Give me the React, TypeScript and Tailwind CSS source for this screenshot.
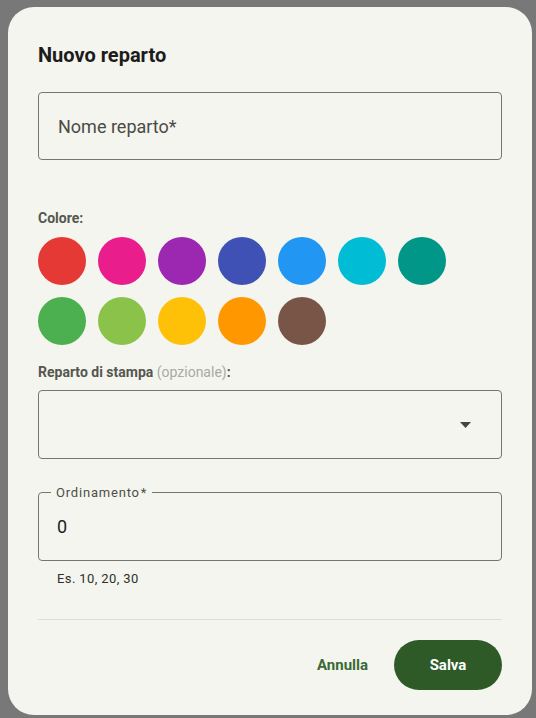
import { useState } from "react";

const colors = [
  "#e53935",
  "#e91e8c",
  "#9c27b0",
  "#3f51b5",
  "#2196f3",
  "#00bcd4",
  "#009688",
  "#4caf50",
  "#8bc34a",
  "#ffc107",
  "#ff9800",
  "#795548",
];

export default function App() {
  const [name, setName] = useState("");
  const [order, setOrder] = useState("0");
  const [selected, setSelected] = useState<string | null>(null);

  return (
    <div
      className="w-[536px] h-[718px] bg-[#787878] pt-[7px] pl-[8px] overflow-hidden"
      style={{ fontFamily: "Roboto, 'Liberation Sans', sans-serif" }}
    >
      <div className="w-[524px] h-[708px] bg-[#f4f5ef] rounded-[26px] px-[30px] pt-[35px] pb-[25px] flex flex-col">
        <h2 className="text-[20px] leading-[26px] font-bold text-[#1c1c1a]">Nuovo reparto</h2>

        <input
          className="mt-[24px] h-[70px] w-full border border-[#727870] rounded-[4px] px-[19px] text-[18px] text-[#222] placeholder:text-[#4a4b46] outline-none bg-transparent"
          placeholder="Nome reparto*"
          value={name}
          onChange={e => setName(e.target.value)}
        />

        <div className="mt-[50px] text-[14px] leading-[16px] font-bold text-[#56574f]">Colore:</div>
        <div className="mt-[11px] grid grid-cols-[repeat(7,48px)] gap-[12px]">
          {colors.map(c => (
            <button
              key={c}
              onClick={() => setSelected(c)}
              className={`w-[48px] h-[48px] rounded-full ${selected === c ? "ring-2 ring-offset-2 ring-[#2d5a27]" : ""}`}
              style={{ backgroundColor: c }}
            />
          ))}
        </div>

        <div className="mt-[19px] text-[14px] leading-[16px] font-bold text-[#56574f]">
          Reparto di stampa <span className="font-normal text-[#a9aaa4]">(opzionale)</span>:
        </div>
        <div className="mt-[10px] h-[70px] w-full border border-[#727870] rounded-[4px] flex items-center justify-end pr-[30px]">
          <svg width="11" height="6" viewBox="0 0 11 6">
            <path d="M0 0 L11 0 L5.5 6 Z" fill="#45463f" />
          </svg>
        </div>

        <fieldset className="mt-[27px] h-[77px] w-full border border-[#727870] rounded-[4px] px-[12px] pb-[6px]">
          <legend className="px-[5px] text-[13px] leading-[14px] tracking-[0.8px] text-[#4e4f48]">
            Ordinamento<span className="ml-[1px]">*</span>
          </legend>
          <input
            className="w-full h-[54px] px-[6px] text-[18px] text-[#1c1c1a] outline-none bg-transparent"
            value={order}
            onChange={e => setOrder(e.target.value)}
          />
        </fieldset>
        <div className="mt-[10px] ml-[19px] text-[13px] leading-[16px] tracking-[0.4px] text-[#2f302b]">Es. 10, 20, 30</div>

        <div className="mt-[32px] h-px bg-[#dcddd6]" />

        <div className="mt-[20px] flex items-center justify-end gap-[26px]">
          <button className="text-[15px] font-bold text-[#3b6a35]">Annulla</button>
          <button className="w-[108px] h-[50px] rounded-full bg-[#2d5a27] text-white text-[15px] font-bold">Salva</button>
        </div>
      </div>
    </div>
  );
}
